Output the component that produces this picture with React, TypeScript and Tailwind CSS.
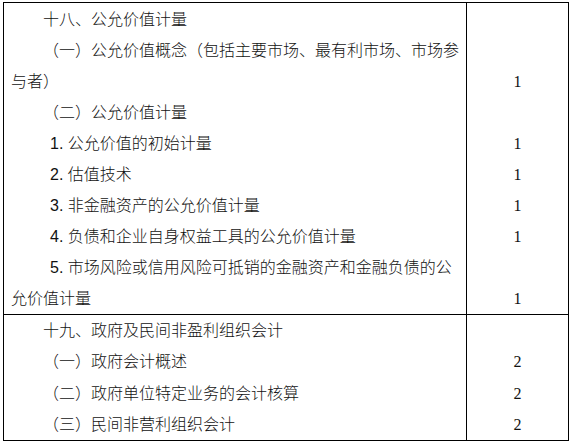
import React from "react";

type Line = { text: string; indent: "h" | "n" | "c" };

const row1Left: Line[] = [
  { text: "十八、公允价值计量", indent: "h" },
  { text: "（一）公允价值概念（包括主要市场、最有利市场、市场参", indent: "h" },
  { text: "与者）", indent: "c" },
  { text: "（二）公允价值计量", indent: "h" },
  { text: "1. 公允价值的初始计量", indent: "n" },
  { text: "2. 估值技术", indent: "n" },
  { text: "3. 非金融资产的公允价值计量", indent: "n" },
  { text: "4. 负债和企业自身权益工具的公允价值计量", indent: "n" },
  { text: "5. 市场风险或信用风险可抵销的金融资产和金融负债的公", indent: "n" },
  { text: "允价值计量", indent: "c" },
];
const row1Right = ["", "", "1", "", "1", "1", "1", "1", "", "1"];

const row2Left: Line[] = [
  { text: "十九、政府及民间非盈利组织会计", indent: "h" },
  { text: "（一）政府会计概述", indent: "h" },
  { text: "（二）政府单位特定业务的会计核算", indent: "h" },
  { text: "（三）民间非营利组织会计", indent: "h" },
];
const row2Right = ["", "2", "2", "2"];

function LeftLine({ line, lh }: { line: Line; lh: string }) {
  const pad =
    line.indent === "h" ? "pl-[32px]" : line.indent === "n" ? "pl-[39px]" : "pl-0";
  return <div className={`whitespace-nowrap ${pad} ${lh}`}>{line.text}</div>;
}

export default function App() {
  return (
    <div className="w-[572px] h-[444px] bg-white overflow-hidden">
      <div
        className="ml-[3px] mt-[2px] w-[566px] border border-black text-[16px] font-light text-[#111]"
        style={{ fontFamily: '"Liberation Sans", "Noto Sans CJK SC", sans-serif' }}
      >
        {/* Row 1 */}
        <div className="flex h-[311px]">
          <div className="w-[462px] pl-[7px] pt-[1px]">
            {row1Left.map((l, i) => (
              <LeftLine key={i} line={l} lh="h-[31px] leading-[31px]" />
            ))}
          </div>
          <div
            className="w-[102px] border-l border-black pt-[1px] text-center font-normal"
            style={{ fontFamily: '"Liberation Serif", serif' }}
          >
            {row1Right.map((t, i) => (
              <div key={i} className="h-[31px] leading-[31px]">
                {t}
              </div>
            ))}
          </div>
        </div>
        {/* Row 2 */}
        <div className="flex h-[126px] border-t border-black">
          <div className="w-[462px] pl-[7px]">
            {row2Left.map((l, i) => (
              <LeftLine key={i} line={l} lh="h-[31.25px] leading-[31.25px]" />
            ))}
          </div>
          <div
            className="w-[102px] border-l border-black text-center font-normal"
            style={{ fontFamily: '"Liberation Serif", serif' }}
          >
            {row2Right.map((t, i) => (
              <div key={i} className="h-[31.25px] leading-[31.25px]">
                {t}
              </div>
            ))}
          </div>
        </div>
      </div>
    </div>
  );
}
